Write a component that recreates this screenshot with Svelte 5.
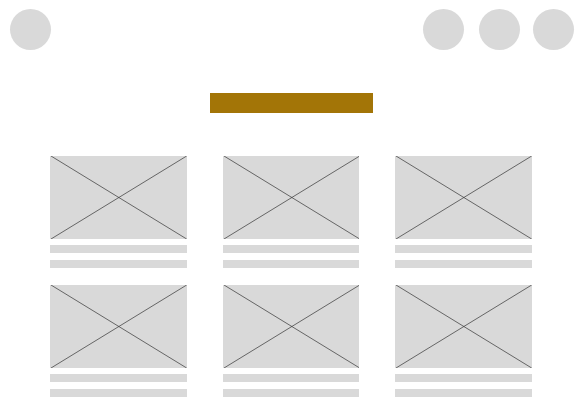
<script>
  const cards = [1, 2, 3, 4, 5, 6];
</script>

<header>
  <a class="dot" href="#home" aria-label="Home"></a>
  <nav aria-label="Main">
    <button class="dot" type="button" aria-label="Search"></button>
    <div class="pair">
      <button class="dot" type="button" aria-label="Cart"></button>
      <button class="dot" type="button" aria-label="Account"></button>
    </div>
  </nav>
</header>

<main>
  <button class="banner" type="button" aria-label="Browse"></button>
  <div class="grid">
    {#each cards as card (card)}
      <article>
        <svg viewBox="0 0 136 83" preserveAspectRatio="none" aria-hidden="true">
          <path d="M1 0L136 83M1 83L136 0" />
        </svg>
        <div class="lines">
          <span></span>
          <span></span>
        </div>
      </article>
    {/each}
  </div>
</main>

<style>
  :global(body) {
    margin: 0;
    background: #fff;
    font-family: "Liberation Sans", sans-serif;
  }

  header {
    display: flex;
    justify-content: space-between;
    padding: 9px 10px 0;
  }

  nav {
    display: flex;
    gap: 15px;
  }

  .pair {
    display: flex;
    gap: 13px;
  }

  .dot {
    display: block;
    width: 41px;
    height: 41px;
    padding: 0;
    border: 0;
    border-radius: 50%;
    background: #d9d9d9;
  }

  main {
    display: flex;
    flex-direction: column;
    align-items: center;
    gap: 43px;
    padding: 43px 52px 15px 50px;
  }

  .banner {
    width: 163px;
    height: 20px;
    padding: 0;
    border: 0;
    background: #a37507;
  }

  .grid {
    display: grid;
    grid-template-columns: repeat(3, 1fr);
    gap: 17px 36px;
    width: 100%;
  }

  article {
    display: flex;
    flex-direction: column;
    gap: 6px;
  }

  svg {
    display: block;
    width: 100%;
    height: 83px;
    background: #d9d9d9;
  }

  path {
    fill: none;
    stroke: #333;
    stroke-width: 0.7;
    vector-effect: non-scaling-stroke;
  }

  .lines {
    display: flex;
    flex-direction: column;
    gap: 7px;
  }

  .lines span {
    height: 8px;
    background: #d9d9d9;
  }
</style>
